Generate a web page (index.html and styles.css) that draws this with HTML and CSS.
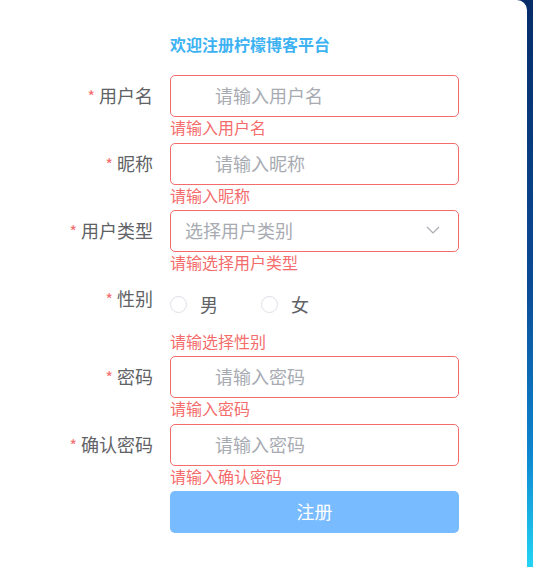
FILE: index.html
```html
<!DOCTYPE html>
<html lang="zh-CN">
<head>
    <meta charset="UTF-8">
    <meta name="viewport" content="width=device-width, initial-scale=1.0">
    <title>注册</title>
    <link rel="stylesheet" href="styles.css">
</head>
<body>

<div class="card">
    <h2 class="title">欢迎注册柠檬博客平台</h2>

    <form class="register-form">
        <!-- 用户名 -->
        <div class="form-item">
            <label class="item-label"><span class="star">*</span> 用户名</label>
            <div class="item-content">
                <input class="text-input" type="text" placeholder="请输入用户名">
                <div class="item-error">请输入用户名</div>
            </div>
        </div>

        <!-- 昵称 -->
        <div class="form-item">
            <label class="item-label"><span class="star">*</span> 昵称</label>
            <div class="item-content">
                <input class="text-input" type="text" placeholder="请输入昵称">
                <div class="item-error">请输入昵称</div>
            </div>
        </div>

        <!-- 用户类型 -->
        <div class="form-item">
            <label class="item-label"><span class="star">*</span> 用户类型</label>
            <div class="item-content">
                <div class="select-box">
                    <span class="select-placeholder">选择用户类别</span>
                    <svg class="select-arrow" width="14" height="8" viewBox="0 0 14 8">
                        <polyline points="1,1 7,7 13,1" fill="none" stroke="#a8abb2" stroke-width="1.2"/>
                    </svg>
                </div>
                <div class="item-error">请输选择用户类型</div>
            </div>
        </div>

        <!-- 性别 -->
        <div class="form-item">
            <label class="item-label"><span class="star">*</span> 性别</label>
            <div class="item-content">
                <div class="radio-group">
                    <label class="radio"><span class="radio-circle"></span>男</label>
                    <label class="radio"><span class="radio-circle"></span>女</label>
                </div>
                <div class="item-error">请输选择性别</div>
            </div>
        </div>

        <!-- 密码 -->
        <div class="form-item">
            <label class="item-label"><span class="star">*</span> 密码</label>
            <div class="item-content">
                <input class="text-input" type="password" placeholder="请输入密码">
                <div class="item-error">请输入密码</div>
            </div>
        </div>

        <!-- 确认密码 -->
        <div class="form-item">
            <label class="item-label"><span class="star">*</span> 确认密码</label>
            <div class="item-content">
                <input class="text-input" type="password" placeholder="请输入密码">
                <div class="item-error">请输入确认密码</div>
            </div>
        </div>

        <div class="form-item">
            <div class="item-label"></div>
            <div class="item-content">
                <button class="submit-btn" type="button">注册</button>
            </div>
        </div>
    </form>
</div>

</body>
</html>
```

FILE: styles.css
```css
body {
    margin: 0;
    height: 567px;
    overflow: hidden;
    font-family: "Noto Sans CJK SC", "Noto Sans", sans-serif;
    background: linear-gradient(to bottom, #062c68 0%, #0a4a95 50%, #0d86cf 80%, #22d4f4 100%);
}
.card {
    width: 527px;
    height: 567px;
    background-color: #fff;
    border-top-right-radius: 10px;
    box-sizing: border-box;
    padding-top: 33px;
}
.title {
    margin: 0 0 20px 170px;
    font-size: 16px;
    line-height: 22px;
    font-weight: bold;
    color: #3cb2f3;
}

/* formulier rijen */
.form-item {
    display: flex;
    margin-bottom: 5.5px;
}
.item-label {
    width: 170px;
    flex-shrink: 0;
    box-sizing: border-box;
    padding-right: 17px;
    padding-bottom: 3px;
    text-align: right;
    font-size: 18px;
    line-height: 40px;
    color: #606266;
}
.star {
    color: #f56c6c;
    font-size: 16px;
}
.item-content {
    width: 289px;
}
.item-error {
    font-size: 16px;
    line-height: 20px;
    color: #f56c6c;
}

.text-input {
    display: block;
    width: 100%;
    height: 42px;
    box-sizing: border-box;
    padding: 0 14px 2px 44px;
    border: 1px solid #f56c6c;
    border-radius: 5px;
    font-family: inherit;
    font-size: 18px;
    color: #606266;
    outline: none;
}
.text-input::placeholder {
    color: #a8abb2;
}

.select-box {
    display: flex;
    align-items: center;
    justify-content: space-between;
    height: 42px;
    box-sizing: border-box;
    padding: 0 18px 2px 14px;
    border: 1px solid #f56c6c;
    border-radius: 5px;
}
.select-placeholder {
    font-size: 18px;
    color: #a8abb2;
}

.radio-group {
    display: flex;
    align-items: center;
    gap: 43px;
    height: 53px;
}
.radio {
    display: flex;
    align-items: center;
    gap: 13px;
    font-size: 18px;
    color: #606266;
}
.radio-circle {
    width: 17px;
    height: 17px;
    box-sizing: border-box;
    border: 1px solid #dcdfe6;
    border-radius: 50%;
}

.submit-btn {
    display: block;
    width: 100%;
    height: 42px;
    padding-bottom: 4px;
    border: none;
    border-radius: 5px;
    background-color: #79bbff;
    color: #fff;
    font-family: inherit;
    font-size: 18px;
}
```
